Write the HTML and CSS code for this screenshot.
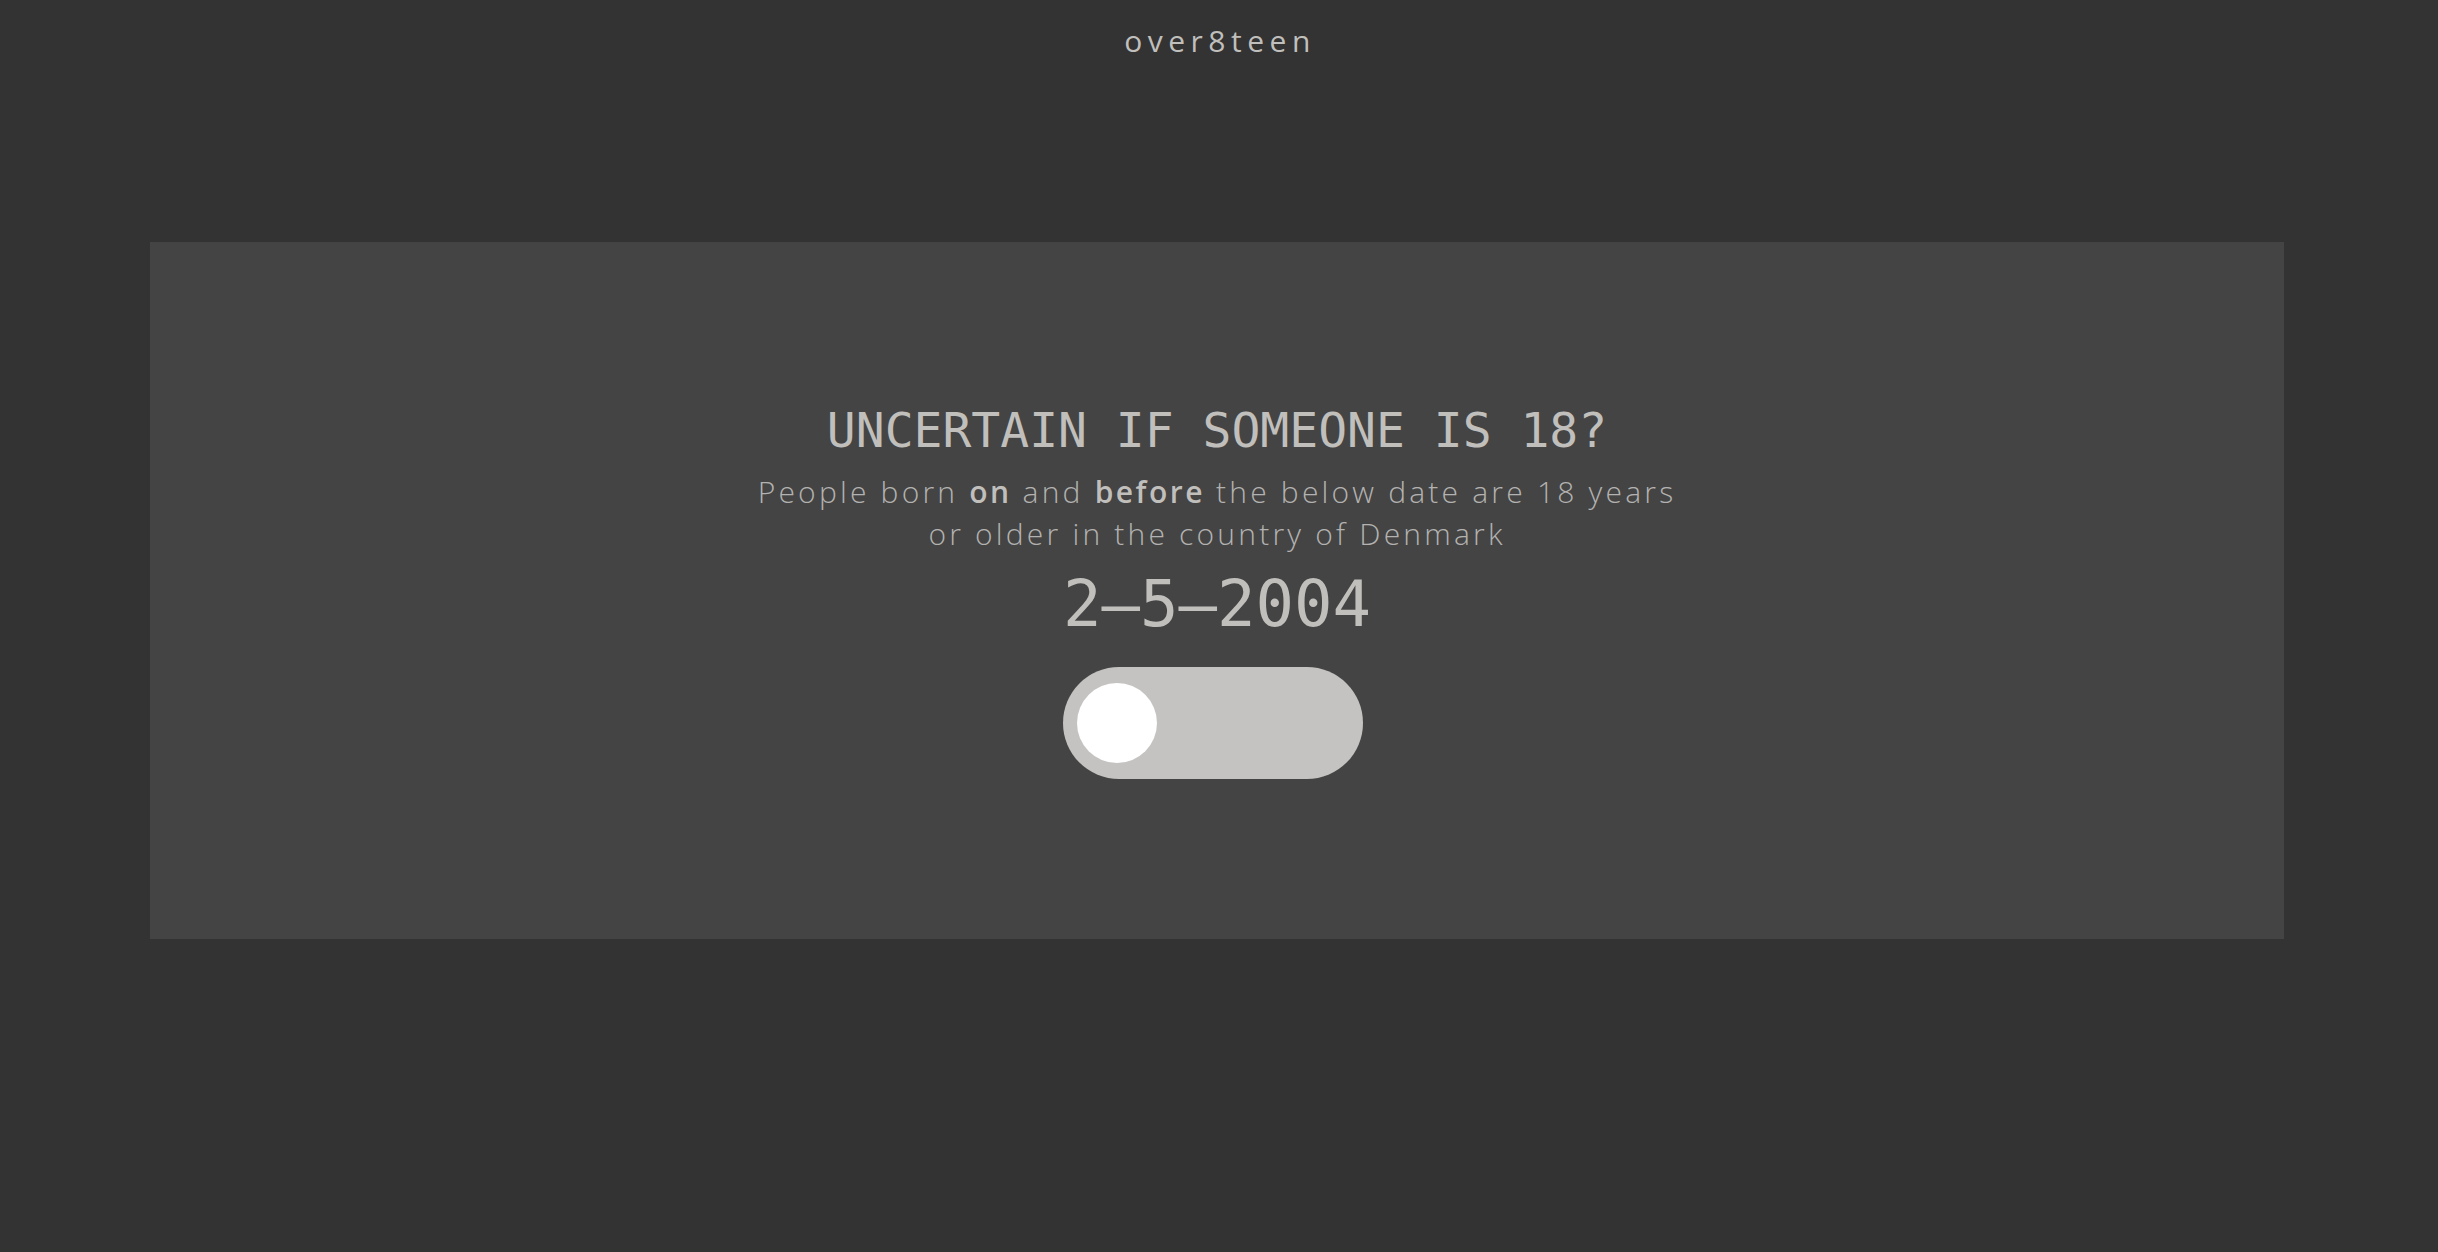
FILE: index.html
```html
<!DOCTYPE html>
<html lang="en">
<head>
<meta charset="utf-8">
<title>over8teen</title>
<link rel="stylesheet" href="styles.css">
</head>
<body>
<header class="top">
  <div class="brand">over8teen</div>
</header>
<main class="card">
  <h1 class="heading">UNCERTAIN IF SOMEONE IS 18?</h1>
  <p class="lead">People born <b>on</b> and <b>before</b> the below date are 18 years<br>or older in the country of Denmark</p>
  <div class="date">2–5–2004</div>
  <div class="toggle"><span class="knob"></span></div>
</main>
</body>
</html>
```

FILE: styles.css
```css
html, body {
  margin: 0;
  padding: 0;
  background: #333333;
  height: 100%;
}
body {
  font-family: "Open Sans", "Noto Sans", sans-serif;
  color: #b0afad;
}
.top {
  padding-top: 21px;
  display: flex;
  justify-content: center;
}
.brand {
  font-size: 30px;
  line-height: 40px;
  letter-spacing: 5.5px;
  color: #c0bfbc;
  padding-left: 2px;
}
.card {
  margin: 181px 0 0 150px;
  width: 2134px;
  box-sizing: border-box;
  padding: 160px 0 160px;
  background: #444444;
  display: flex;
  flex-direction: column;
  align-items: center;
}
.heading {
  margin: 0;
  font-family: "DejaVu Sans Mono", monospace;
  font-weight: normal;
  font-size: 48px;
  line-height: 56px;
  color: #c0bfbc;
}
.lead {
  margin: 13px 0 0;
  font-size: 30px;
  line-height: 42px;
  font-weight: 300;
  letter-spacing: 3.2px;
  text-align: center;
  color: #b3b2b0;
}
.lead b {
  font-weight: 600;
  letter-spacing: 2.5px;
  color: #c0bfbc;
}
.date {
  margin-top: 12px;
  font-family: "DejaVu Sans Mono", monospace;
  font-size: 64px;
  line-height: 75px;
  color: #c0bfbc;
}
.toggle {
  margin-top: 25px;
  margin-right: 8px;
  width: 300px;
  height: 112px;
  border-radius: 56px;
  background: #c4c3c1;
  box-sizing: border-box;
  padding: 16px 14px;
  display: flex;
  align-items: center;
}
.knob {
  width: 80px;
  height: 80px;
  border-radius: 50%;
  background: #ffffff;
}
```
